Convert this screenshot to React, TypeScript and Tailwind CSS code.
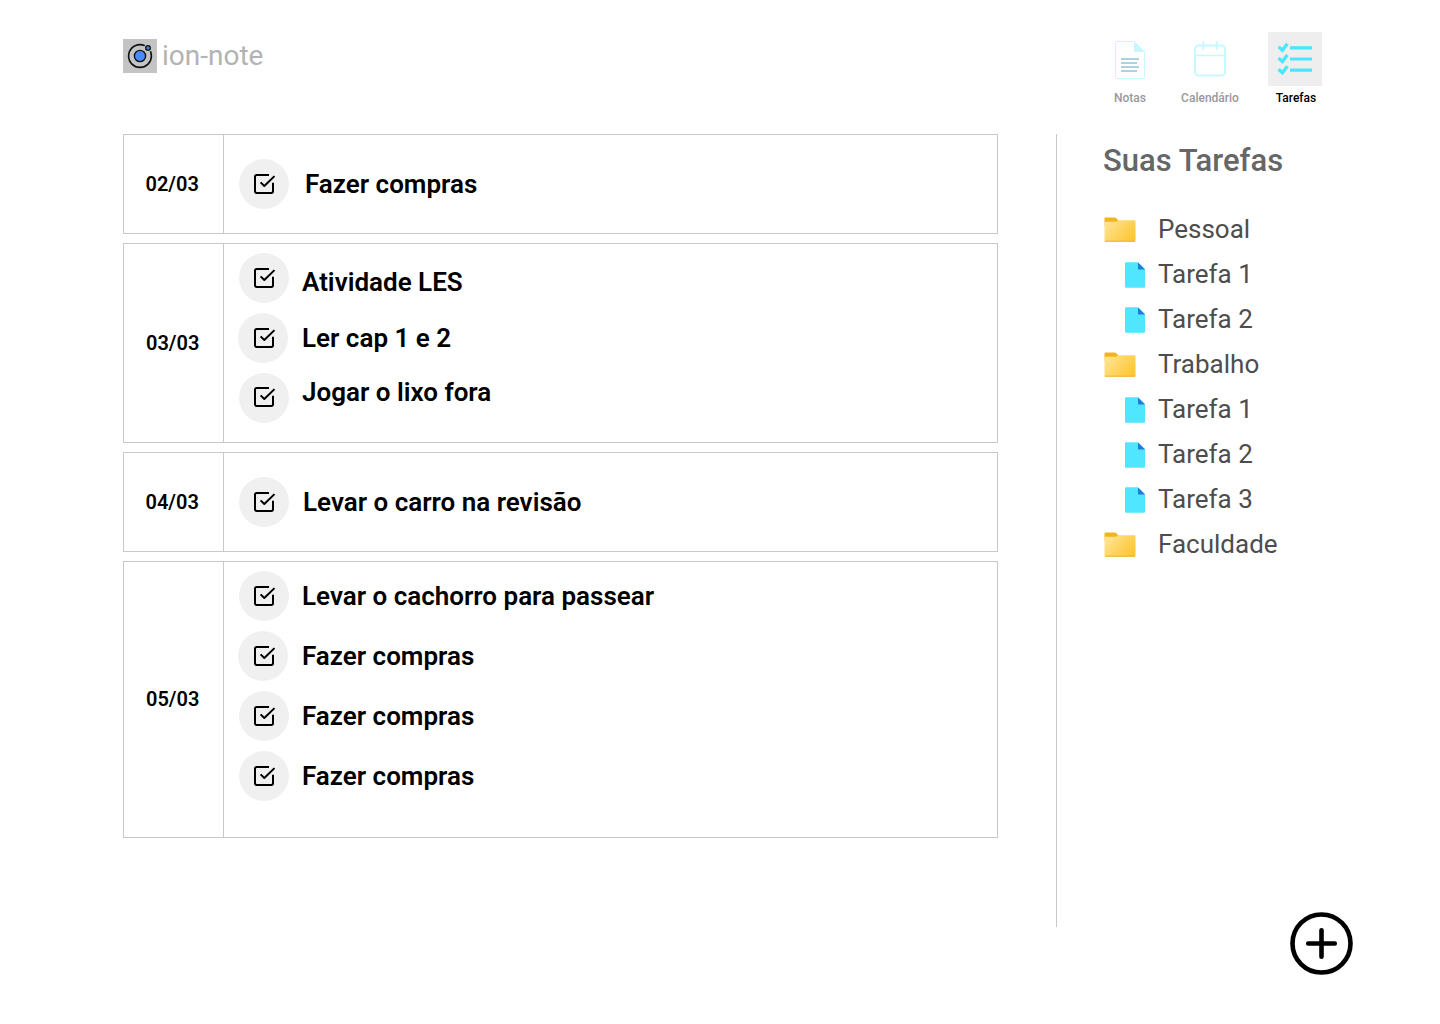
import React from "react";

type Task = { label: string; circle?: string; icon?: string; text: string };
type Day = { date: string; height: string; pad: string; datePad: string; tasks: Task[] };

const days: Day[] = [
  {
    date: "02/03",
    height: "h-[100px]",
    pad: "pt-6",
    datePad: "pl-[21.5px]",
    tasks: [{ label: "Fazer compras", text: "pl-4" }],
  },
  {
    date: "03/03",
    height: "h-[200px]",
    pad: "pt-[9px]",
    datePad: "pl-[22px]",
    tasks: [
      { label: "Atividade LES", text: "pl-[13px] pt-2" },
      { label: "Ler cap 1 e 2", circle: "-ml-px mr-px", icon: "ml-0.5", text: "pl-[13px]" },
      { label: "Jogar o lixo fora", icon: "mb-0.5", text: "pl-[13px] pb-3" },
    ],
  },
  {
    date: "04/03",
    height: "h-[100px]",
    pad: "pt-6",
    datePad: "pl-[21.5px]",
    tasks: [{ label: "Levar o carro na revisão", text: "pl-[14px]" }],
  },
  {
    date: "05/03",
    height: "h-[277px]",
    pad: "pt-[9px]",
    datePad: "pl-[22px] pb-px",
    tasks: [
      { label: "Levar o cachorro para passear", text: "pl-[13px]" },
      { label: "Fazer compras", circle: "-ml-px mr-px", icon: "ml-0.5", text: "pl-[13px]" },
      { label: "Fazer compras", text: "pl-[13px]" },
      { label: "Fazer compras", text: "pl-[13px]" },
    ],
  },
];

const tree = [
  { folder: true, label: "Pessoal" },
  { folder: false, label: "Tarefa 1" },
  { folder: false, label: "Tarefa 2" },
  { folder: true, label: "Trabalho" },
  { folder: false, label: "Tarefa 1" },
  { folder: false, label: "Tarefa 2" },
  { folder: false, label: "Tarefa 3" },
  { folder: true, label: "Faculdade" },
];

function Logo() {
  return (
    <svg className="h-[34px] w-[34px] bg-[#c4c4c4]" viewBox="0 0 34 34" fill="none">
      <circle cx="17" cy="17" r="11.4" stroke="#111" strokeWidth="1.6" />
      <circle cx="17" cy="17" r="5.6" fill="#4a8bfc" stroke="#111" strokeWidth="1.4" />
      <circle cx="25" cy="8.9" r="3.9" fill="#c4c4c4" />
      <circle cx="25" cy="8.9" r="2.3" fill="#3f7fe0" stroke="#111" strokeWidth="1.3" />
    </svg>
  );
}

function NoteIcon() {
  return (
    <svg className="h-[38px] w-[30px]" viewBox="0 0 30 38" fill="none">
      <path d="M1.5.5H19L29.5 11v25.5a1 1 0 0 1-1 1h-27a1 1 0 0 1-1-1v-35a1 1 0 0 1 1-1Z" stroke="#c8f8ff" />
      <path d="M19 0l11 11H20a1 1 0 0 1-1-1Z" fill="#c8f8ff" />
      <path d="M6 18h18M6 22h16M6 26h18M6 30h16" stroke="#b1d1df" strokeWidth="2" />
    </svg>
  );
}

function CalendarIcon() {
  return (
    <svg className="h-9 w-8" viewBox="0 0 32 36" fill="none" stroke="#c8f8ff" strokeLinecap="round">
      <rect x="1" y="4.5" width="30" height="30" rx="3.5" strokeWidth="2" />
      <path d="M1 14.5h30" strokeWidth="1.5" />
      <path d="M9.3 1v7M22.7 1v7" strokeWidth="2" />
    </svg>
  );
}

function ChecklistIcon() {
  return (
    <svg className="h-[54px] w-[54px] bg-[#eee]" viewBox="0 0 54 54" fill="none" stroke="#4ae5ff">
      <path d="M22 15.8h22M22 27h22M22 38.2h22" strokeWidth="3.2" />
      <path
        d="M11.8 15.9l2.6 2.4 4-5.2M11.8 27.1l2.6 2.4 4-5.2M11.8 38.3l2.6 2.4 4-5.2"
        strokeWidth="3.3"
        strokeLinecap="square"
      />
    </svg>
  );
}

function CheckIcon({ className = "" }: { className?: string }) {
  return (
    <svg
      className={`box-content h-6 w-6 shrink-0 ${className}`}
      viewBox="0 0 24 24"
      fill="none"
      stroke="#000"
      strokeWidth="2"
      strokeLinejoin="round"
    >
      <path d="M17 3H4.7A1.7 1.7 0 0 0 3 4.7v14.6A1.7 1.7 0 0 0 4.7 21h14.6a1.7 1.7 0 0 0 1.7-1.7v-8.5" />
      <path d="M8.6 10.4l3.7 3.6L22.5 4.1" />
    </svg>
  );
}

function FolderIcon() {
  return (
    <svg className="h-[26px] w-8" viewBox="0 0 32 26" fill="none">
      <defs>
        <linearGradient id="folder" x1="2" y1="4" x2="28" y2="26" gradientUnits="userSpaceOnUse">
          <stop stopColor="#ffe596" />
          <stop offset="1" stopColor="#fdc42c" />
        </linearGradient>
      </defs>
      <path d="M1.5.5h9.2c.6 0 1 .2 1.4.6L14.5 3.5V9H.5V1.5a1 1 0 0 1 1-1Z" fill="#f2b51c" />
      <path d="M1.5 4.8H12l2.4-1.5h16.1a1 1 0 0 1 1 1v19.5a1 1 0 0 1-1 1h-29a1 1 0 0 1-1-1v-18a1 1 0 0 1 1-1Z" fill="url(#folder)" />
      <path d="M1 24.2h30" stroke="#eab434" />
    </svg>
  );
}

function FileIcon() {
  return (
    <svg className="h-[26px] w-5" viewBox="0 0 20 26">
      <path d="M1 .3h12L20 7v17.7a1 1 0 0 1-1 1H1a1 1 0 0 1-1-1V1.3a1 1 0 0 1 1-1Z" fill="#50e6ff" />
      <path d="M13 .5L20 7.5h-6.3a.7.7 0 0 1-.7-.7Z" fill="#2579d8" />
    </svg>
  );
}

export default function App() {
  return (
    <div className="h-[1024px] w-[1440px] overflow-hidden bg-white font-['Roboto',sans-serif] text-black">
      <header className="flex h-[134px] justify-between pl-[123px] pr-[118px]">
        <div className="mt-[39px] flex h-[34px] items-center gap-[5px]">
          <Logo />
          <span className="text-[28px] leading-[34px] text-[#b3b3b3]">ion-note</span>
        </div>
        <nav className="flex pt-8 text-[12px] font-medium leading-[14px] text-[#999]">
          <a className="flex w-[56px] flex-col items-center">
            <span className="flex h-[59px] items-start pt-[9px]"><NoteIcon /></span>
            Notas
          </a>
          <a className="ml-[11px] flex w-[82px] flex-col items-center">
            <span className="flex h-[59px] items-start pt-[9px]"><CalendarIcon /></span>
            Calendário
          </a>
          <a className="ml-[17px] flex w-[54px] flex-col items-center text-black">
            <span className="flex h-[59px] items-start"><ChecklistIcon /></span>
            <span className="pl-0.5">Tarefas</span>
          </a>
        </nav>
      </header>

      <div className="flex pl-[123px]">
        <main className="flex w-[875px] flex-col gap-[9px]">
          {days.map((day) => (
            <section key={day.date} className={`flex border border-[#c8c8c8] ${day.height}`}>
              <div className={`flex w-[100px] items-center border-r border-[#c8c8c8] text-[20px] font-semibold ${day.datePad}`}>
                {day.date}
              </div>
              <ul className={`flex flex-col gap-2.5 pl-[15px] ${day.pad}`}>
                {day.tasks.map((task, i) => (
                  <li key={i} className="flex h-[50px] items-center">
                    <span className={`flex size-[50px] shrink-0 items-center justify-center rounded-full bg-[#f0f0f0] ${task.circle ?? ""}`}>
                      <CheckIcon className={task.icon} />
                    </span>
                    <span className={`whitespace-nowrap text-[26px] font-semibold leading-[30px] ${task.text}`}>{task.label}</span>
                  </li>
                ))}
              </ul>
            </section>
          ))}
        </main>

        <aside className="ml-[58px] h-[793px] border-l border-[#c8c8c8] pl-[46px]">
          <h2 className="pt-[9px] text-[31px] font-medium leading-9 text-[#666]">Suas Tarefas</h2>
          <ul className="pt-7">
            {tree.map((item, i) => (
              <li key={i} className="flex h-[45px] items-center text-[26px] text-[#4d4d4d]">
                <span className={item.folder ? "w-[55px] pl-px" : "w-[55px] pl-[22px]"}>
                  {item.folder ? <FolderIcon /> : <FileIcon />}
                </span>
                {item.label}
              </li>
            ))}
          </ul>
        </aside>
      </div>

      <div className="flex justify-end pr-[87px]">
        <button aria-label="Adicionar" className="-mt-[15px] h-[63px] w-[63px]">
          <svg viewBox="0 0 63 63" fill="none" stroke="#000" strokeWidth="4.6" strokeLinecap="round">
            <circle cx="31.5" cy="31.5" r="29" />
            <path d="M18.2 31.5h26.6M31.5 18.2v26.6" />
          </svg>
        </button>
      </div>
    </div>
  );
}
